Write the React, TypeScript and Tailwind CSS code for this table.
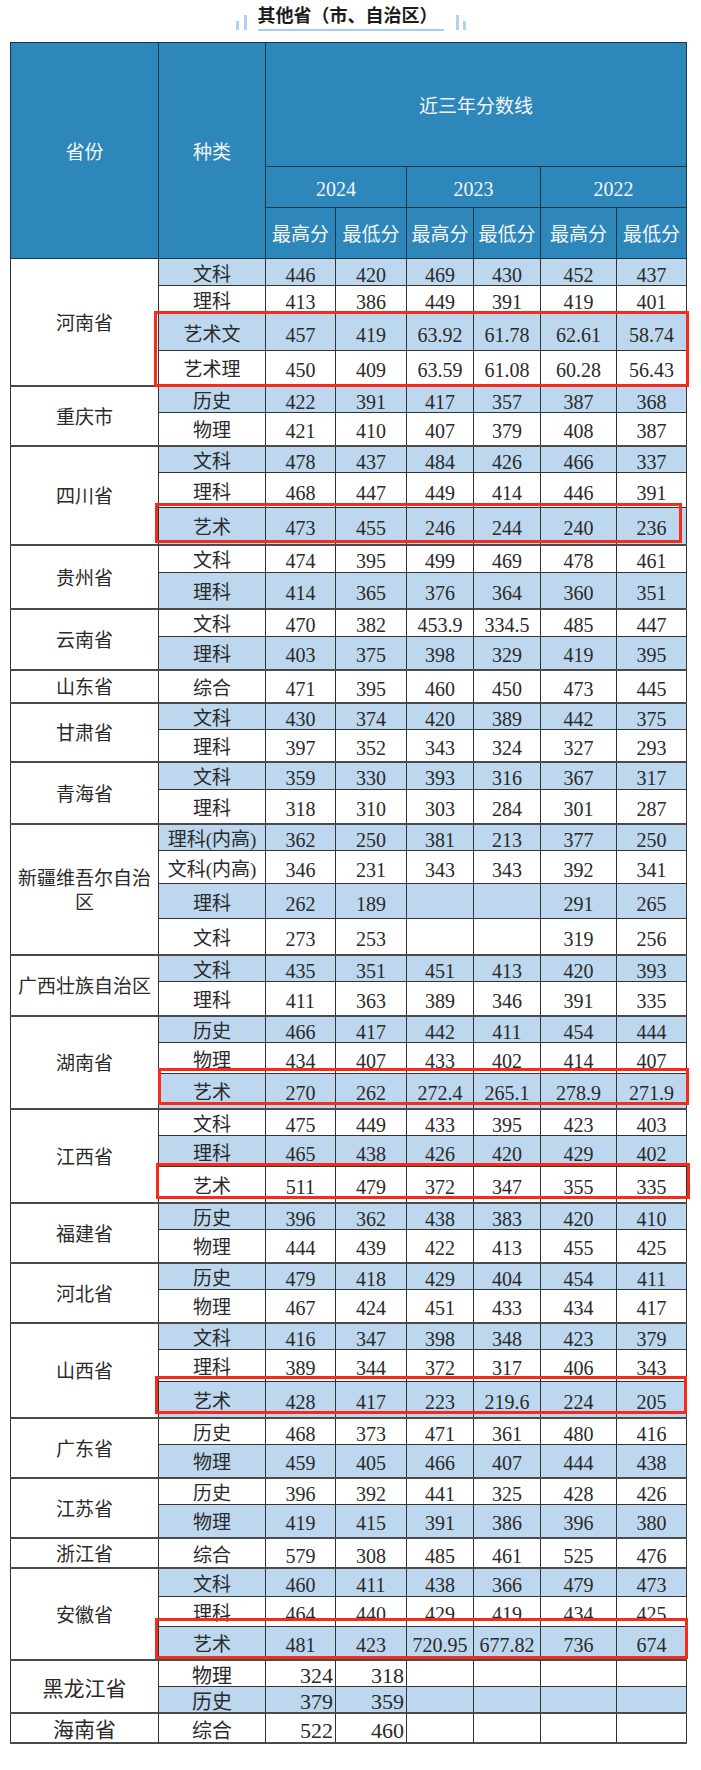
import React from 'react'

type Row = { k: string; v: string[]; blue?: boolean; h: string }
type Group = { p: string; rows: Row[]; big?: boolean }

const groups: Group[] = [
  {
    p: '河南省',
    rows: [
      { k: '文科', v: ['446', '420', '469', '430', '452', '437'], blue: true, h: 'h-[27px]' },
      { k: '理科', v: ['413', '386', '449', '391', '419', '401'], h: 'h-[28px]' },
      { k: '艺术文', v: ['457', '419', '63.92', '61.78', '62.61', '58.74'], blue: true, h: 'h-[37px]' },
      { k: '艺术理', v: ['450', '409', '63.59', '61.08', '60.28', '56.43'], h: 'h-[35px]' },
    ],
  },
  {
    p: '重庆市',
    rows: [
      { k: '历史', v: ['422', '391', '417', '357', '387', '368'], blue: true, h: 'h-[27px]' },
      { k: '物理', v: ['421', '410', '407', '379', '408', '387'], h: 'h-[33px]' },
    ],
  },
  {
    p: '四川省',
    rows: [
      { k: '文科', v: ['478', '437', '484', '426', '466', '337'], blue: true, h: 'h-[27px]' },
      { k: '理科', v: ['468', '447', '449', '414', '446', '391'], h: 'h-[35px]' },
      { k: '艺术', v: ['473', '455', '246', '244', '240', '236'], blue: true, h: 'h-[37px]' },
    ],
  },
  {
    p: '贵州省',
    rows: [
      { k: '文科', v: ['474', '395', '499', '469', '478', '461'], h: 'h-[28px]' },
      { k: '理科', v: ['414', '365', '376', '364', '360', '351'], blue: true, h: 'h-[36px]' },
    ],
  },
  {
    p: '云南省',
    rows: [
      { k: '文科', v: ['470', '382', '453.9', '334.5', '485', '447'], h: 'h-[28px]' },
      { k: '理科', v: ['403', '375', '398', '329', '419', '395'], blue: true, h: 'h-[33px]' },
    ],
  },
  {
    p: '山东省',
    rows: [{ k: '综合', v: ['471', '395', '460', '450', '473', '445'], h: 'h-[33px]' }],
  },
  {
    p: '甘肃省',
    rows: [
      { k: '文科', v: ['430', '374', '420', '389', '442', '375'], blue: true, h: 'h-[26px]' },
      { k: '理科', v: ['397', '352', '343', '324', '327', '293'], h: 'h-[33px]' },
    ],
  },
  {
    p: '青海省',
    rows: [
      { k: '文科', v: ['359', '330', '393', '316', '367', '317'], blue: true, h: 'h-[27px]' },
      { k: '理科', v: ['318', '310', '303', '284', '301', '287'], h: 'h-[35px]' },
    ],
  },
  {
    p: '新疆维吾尔自治区',
    rows: [
      { k: '理科(内高)', v: ['362', '250', '381', '213', '377', '250'], blue: true, h: 'h-[25px]' },
      { k: '文科(内高)', v: ['346', '231', '343', '343', '392', '341'], h: 'h-[33px]' },
      { k: '理科', v: ['262', '189', '', '', '291', '265'], blue: true, h: 'h-[35px]' },
      { k: '文科', v: ['273', '253', '', '', '319', '256'], h: 'h-[36px]' },
    ],
  },
  {
    p: '广西壮族自治区',
    rows: [
      { k: '文科', v: ['435', '351', '451', '413', '420', '393'], blue: true, h: 'h-[26px]' },
      { k: '理科', v: ['411', '363', '389', '346', '391', '335'], h: 'h-[35px]' },
    ],
  },
  {
    p: '湖南省',
    rows: [
      { k: '历史', v: ['466', '417', '442', '411', '454', '444'], blue: true, h: 'h-[26px]' },
      { k: '物理', v: ['434', '407', '433', '402', '414', '407'], h: 'h-[31px]' },
      { k: '艺术', v: ['270', '262', '272.4', '265.1', '278.9', '271.9'], blue: true, h: 'h-[35px]' },
    ],
  },
  {
    p: '江西省',
    rows: [
      { k: '文科', v: ['475', '449', '433', '395', '423', '403'], h: 'h-[27px]' },
      { k: '理科', v: ['465', '438', '426', '420', '429', '402'], blue: true, h: 'h-[31px]' },
      { k: '艺术', v: ['511', '479', '372', '347', '355', '335'], h: 'h-[36px]' },
    ],
  },
  {
    p: '福建省',
    rows: [
      { k: '历史', v: ['396', '362', '438', '383', '420', '410'], blue: true, h: 'h-[27px]' },
      { k: '物理', v: ['444', '439', '422', '413', '455', '425'], h: 'h-[33px]' },
    ],
  },
  {
    p: '河北省',
    rows: [
      { k: '历史', v: ['479', '418', '429', '404', '454', '411'], blue: true, h: 'h-[27px]' },
      { k: '物理', v: ['467', '424', '451', '433', '434', '417'], h: 'h-[33px]' },
    ],
  },
  {
    p: '山西省',
    rows: [
      { k: '文科', v: ['416', '347', '398', '348', '423', '379'], blue: true, h: 'h-[27px]' },
      { k: '理科', v: ['389', '344', '372', '317', '406', '343'], h: 'h-[32px]' },
      { k: '艺术', v: ['428', '417', '223', '219.6', '224', '205'], blue: true, h: 'h-[36px]' },
    ],
  },
  {
    p: '广东省',
    rows: [
      { k: '历史', v: ['468', '373', '471', '361', '480', '416'], h: 'h-[27px]' },
      { k: '物理', v: ['459', '405', '466', '407', '444', '438'], blue: true, h: 'h-[33px]' },
    ],
  },
  {
    p: '江苏省',
    rows: [
      { k: '历史', v: ['396', '392', '441', '325', '428', '426'], h: 'h-[26px]' },
      { k: '物理', v: ['419', '415', '391', '386', '396', '380'], blue: true, h: 'h-[34px]' },
    ],
  },
  {
    p: '浙江省',
    rows: [{ k: '综合', v: ['579', '308', '485', '461', '525', '476'], h: 'h-[30px]' }],
  },
  {
    p: '安徽省',
    rows: [
      { k: '文科', v: ['460', '411', '438', '366', '479', '473'], blue: true, h: 'h-[28px]' },
      { k: '理科', v: ['464', '440', '429', '419', '434', '425'], h: 'h-[30px]' },
      { k: '艺术', v: ['481', '423', '720.95', '677.82', '736', '674'], blue: true, h: 'h-[34px]' },
    ],
  },
  {
    p: '黑龙江省',
    big: true,
    rows: [
      { k: '物理', v: ['324', '318', '', '', '', ''], h: 'h-[26px]' },
      { k: '历史', v: ['379', '359', '', '', '', ''], blue: true, h: 'h-[26px]' },
    ],
  },
  {
    p: '海南省',
    big: true,
    rows: [{ k: '综合', v: ['522', '460', '', '', '', ''], h: 'h-[26px]' }],
  },
]

// red highlight frames, relative to the table's top-left corner
const frames = [
  'left-[144px] top-[269px] w-[535px] h-[76px]',
  'left-[145px] top-[461px] w-[527px] h-[40px]',
  'left-[148px] top-[1026px] w-[531px] h-[37px]',
  'left-[146px] top-[1121px] w-[534px] h-[36px]',
  'left-[145px] top-[1334px] w-[532px] h-[38px]',
  'left-[145px] top-[1576px] w-[533px] h-[41px]',
]

const head = 'border border-[#1d3547] font-normal text-center align-middle p-0 pt-[4px] leading-[22px]'
const digits = "font-['Liberation_Sans_Narrow','Liberation_Serif','Noto_Sans_CJK_SC',serif]"
const years = ['2024', '2023', '2022']

export default function App() {
  return (
    <div className="w-[701px] min-h-[1770px] bg-white">
      {/* Title */}
      <div className="flex items-end justify-center pt-[2px]">
        <div className="flex items-end gap-[5px] mr-[11px] mb-[1px]">
          <span className="block w-[3px] h-[9px] bg-[#b1d3f2]" />
          <span className="block w-[3px] h-[15px] bg-[#b1d3f2]" />
        </div>
        <div className="w-[186px]">
          <div className="text-[18px] leading-[24px] font-bold text-[#1c1c1c] font-['Noto_Sans_CJK_SC',sans-serif]">
            其他省（市、自治区）
          </div>
          <div className="mt-[3px] h-[2px] bg-[#a9cdf0]" />
        </div>
        <div className="flex items-end gap-[4px] ml-[12px] mb-[1px]">
          <span className="block w-[3px] h-[15px] bg-[#b1d3f2]" />
          <span className="block w-[3px] h-[9px] bg-[#b1d3f2]" />
        </div>
      </div>

      {/* Table */}
      <div className="relative ml-[10px] mt-[11px] w-[676px]">
        <table className="w-[676px] table-fixed border-collapse font-['Liberation_Serif','Noto_Sans_CJK_SC',serif] text-[19px] text-[#2a2a2a]">
          <colgroup>
            <col className="w-[148px]" />
            <col className="w-[107px]" />
            <col className="w-[70px]" />
            <col className="w-[71px]" />
            <col className="w-[67px]" />
            <col className="w-[67px]" />
            <col className="w-[76px]" />
            <col className="w-[70px]" />
          </colgroup>
          <thead className="bg-[#2e87ba] text-[#f3f6f9]">
            <tr className="h-[124px]">
              <th rowSpan={3} className={head}>省份</th>
              <th rowSpan={3} className={head}>种类</th>
              <th colSpan={6} className={head}>近三年分数线</th>
            </tr>
            <tr className="h-[41px]">
              {years.map((y) => (
                <th key={y} colSpan={2} className={`${head} ${digits} text-[20px]`}>{y}</th>
              ))}
            </tr>
            <tr className="h-[51px]">
              {years.map((y) => (
                <React.Fragment key={y}>
                  <th className={head}>最高分</th>
                  <th className={head}>最低分</th>
                </React.Fragment>
              ))}
            </tr>
          </thead>
          <tbody>
            {groups.map((g) =>
              g.rows.map((r, i) => {
                const last = i === g.rows.length - 1
                const line = last ? 'border-b-2 border-b-[#4a4a4a]' : ''
                const bg = r.blue ? 'bg-[#bdd7ee]' : 'bg-white'
                return (
                  <tr key={g.p + r.k + i} className={r.h}>
                    {i === 0 && (
                      <td
                        rowSpan={g.rows.length}
                        className={`border border-[#333] border-b-2 border-b-[#4a4a4a] bg-white text-center align-middle px-[5px] pt-[4px] leading-[24px] ${
                          g.big ? 'text-[21px]' : ''
                        }`}
                      >
                        {g.p}
                      </td>
                    )}
                    <td
                      className={`border border-[#333] ${line} ${bg} text-center align-middle p-0 pt-[5px] leading-[20px] ${
                        g.big ? 'text-[20px]' : ''
                      }`}
                    >
                      {r.k}
                    </td>
                    {r.v.map((n, j) => (
                      <td
                        key={j}
                        className={`border border-[#333] ${line} ${bg} ${digits} align-middle p-0 pt-[5px] leading-[20px] whitespace-nowrap ${
                          g.big ? 'text-right pr-[2px] text-[22px]' : 'text-center text-[20px]'
                        }`}
                      >
                        {n}
                      </td>
                    ))}
                  </tr>
                )
              })
            )}
          </tbody>
        </table>

        {frames.map((f) => (
          <div key={f} className={`absolute ${f} border-[3px] border-[#f72b1c] pointer-events-none`} />
        ))}
      </div>
    </div>
  )
}
